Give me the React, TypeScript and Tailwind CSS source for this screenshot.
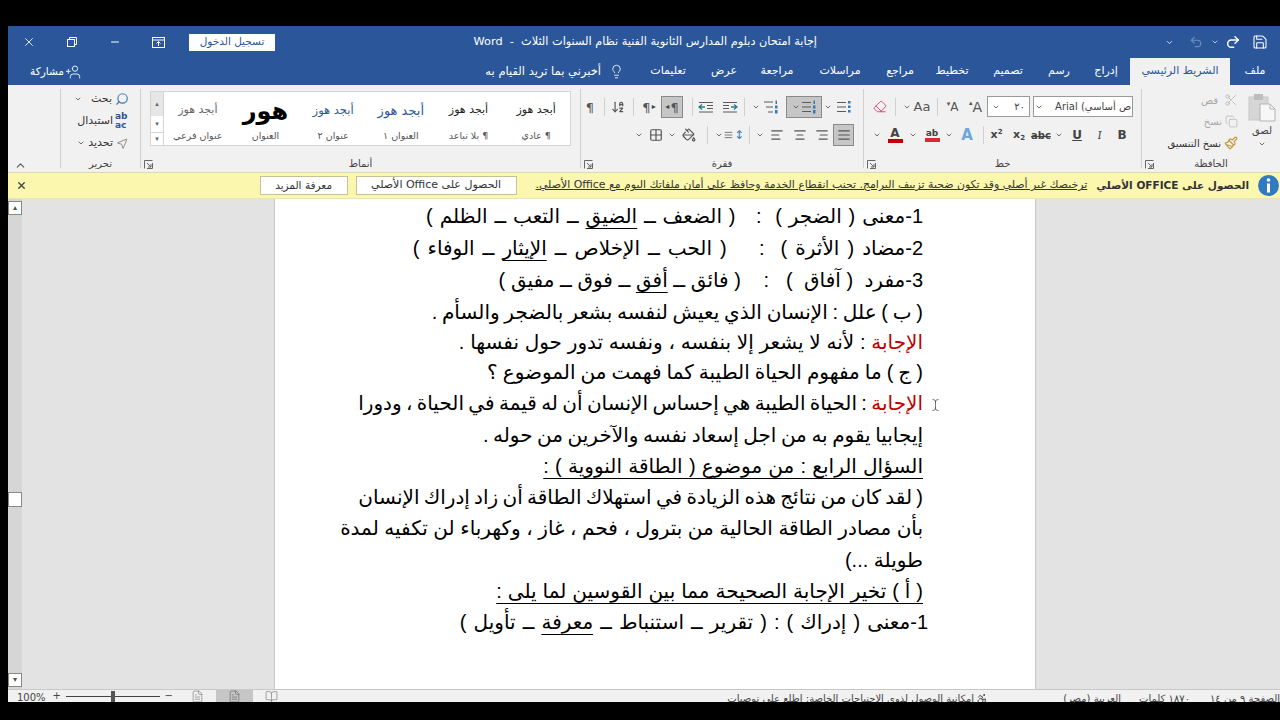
import React from "react";
import { X, Minus, Save, Undo2, Redo2, Lightbulb, UserPlus, Scissors, Copy, Paintbrush, ChevronDown, ChevronUp, Search, MousePointer2, AlignLeft, AlignRight, AlignCenter, AlignJustify, ArrowDownAZ, PaintBucket, Grid2x2, Eraser, TextCursor, FileText, BookOpen, Accessibility } from "lucide-react";

const ui = "font-['DejaVu_Sans',sans-serif]";
const doc = "font-['Liberation_Sans','DejaVu_Sans',sans-serif]";

function Caret() {
  return <ChevronDown className="w-[8px] h-[8px] text-[#555] shrink-0" strokeWidth={2.5} />;
}

function Launcher() {
  return (
    <svg width="9" height="9" viewBox="0 0 9 9" className="absolute left-[3px] bottom-[-1px]">
      <path d="M0.5 8.500v-8h8M3 3l4 4M7 4v3H4M8.500 3v5.500H3" fill="none" stroke="#666" strokeWidth="1" />
    </svg>
  );
}

function GroupLabel({ children }: { children: React.ReactNode }) {
  return <div className="absolute bottom-[-3px] inset-x-0 text-center text-[10px] leading-[14px] text-[#444]">{children}</div>;
}

function Tab({ w, label, active }: { w: string; label: string; active?: boolean }) {
  return (
    <div className={`${w} h-full flex items-center justify-center text-[11px] ${active ? "bg-[#f1f1f1] text-[#2b579a]" : "text-white"}`}>
      {label}
    </div>
  );
}

function Cell({ w, children, active }: { w: string; children?: React.ReactNode; active?: boolean }) {
  return (
    <div className={`${w} shrink-0 flex items-center justify-center gap-[1px] ${active ? "h-[22px] bg-[#c6c6c6] border border-[#8a8a8a]" : "h-[20px]"}`}>
      {children}
    </div>
  );
}

function Sep({ w }: { w: string }) {
  return (
    <div className={`${w} shrink-0 h-[20px] flex items-center justify-center`}>
      <span className="w-px h-[18px] bg-[#cfcfcf]" />
    </div>
  );
}

function ListIcon({ kind }: { kind: "bullet" | "number" | "multi" }) {
  const c = "#5b5b5b";
  const mark = "#2f7ac0";
  return (
    <svg width="16" height="14" viewBox="0 0 16 14">
      {kind === "multi" ? (
        <path d="M1 2h9M3 7h7M5 12h5" stroke={c} strokeWidth="1" fill="none" />
      ) : (
        <path d="M1 2.500h9M1 7h9M1 11.500h9" stroke={c} strokeWidth="1" fill="none" />
      )}
      {kind === "bullet" && (
        <g fill={mark}>
          <rect x="12" y="1" width="2.500" height="2.500" />
          <rect x="12" y="5.500" width="2.500" height="2.500" />
          <rect x="12" y="10" width="2.500" height="2.500" />
        </g>
      )}
      {kind !== "bullet" && (
        <g fill={mark}>
          <rect x="12.500" y="0.500" width="1.500" height="3.500" />
          <rect x="12" y="5.500" width="2.500" height="3" />
          <rect x="12" y="10" width="2.500" height="3.500" />
        </g>
      )}
    </svg>
  );
}

function IndentIcon({ flip }: { flip?: boolean }) {
  return (
    <svg width="16" height="13" viewBox="0 0 16 13" className={flip ? "-scale-x-100" : ""}>
      <path d="M1 1.500h14M9 4.500h6M9 7.500h6M1 11h14" stroke="#5b5b5b" fill="none" />
      <path d="M7 6H1M4 3.500 1 6l3 2.500" stroke="#2b7d90" strokeWidth="1.300" fill="none" />
    </svg>
  );
}

function PasteIcon() {
  return (
    <svg width="28" height="29" viewBox="0 0 28 29">
      <rect x="1" y="4" width="19" height="23" fill="#d6d6d6" stroke="#c8c8c8" />
      <rect x="6" y="1" width="9" height="6" fill="#bdbdbd" />
      <path d="M12 11h10l5 5v12H12z" fill="#f7f7f7" stroke="#b4b4b4" />
      <path d="M22 11v5h5" fill="none" stroke="#b4b4b4" />
    </svg>
  );
}

function Para({ dirRight }: { dirRight?: boolean }) {
  return (
    <span className={`flex items-center gap-[1px] text-[13px] leading-none text-[#555] ${dirRight ? "flex-row-reverse" : ""}`}>
      <span>¶</span>
      <span className="text-[8px] text-[#444]">{dirRight ? "▸" : "◂"}</span>
    </span>
  );
}

function StyleItem({ preview, label, cls }: { preview: string; label: string; cls: string }) {
  return (
    <div className="w-[68px] h-full flex flex-col items-center">
      <div className={`h-[37px] flex items-center whitespace-nowrap ${cls}`}>{preview}</div>
      <div className="text-[9.5px] text-[#555] whitespace-nowrap leading-[14px]">{label}</div>
    </div>
  );
}

function Line({ h, children, cls = "" }: { h: string; children: React.ReactNode; cls?: string }) {
  return <div className={`${h} flex items-center whitespace-nowrap ${cls}`}><span className="whitespace-pre">{children}</span></div>;
}

const U = ({ children }: { children: React.ReactNode }) => <span className="underline underline-offset-[5px] decoration-1">{children}</span>;
const R = ({ children }: { children: React.ReactNode }) => <span className="text-[#c00000]">{children}</span>;

const ic = "w-[14px] h-[14px] text-[#555]";

export default function App() {
  return (
    <div dir="rtl" className={`w-[1280px] h-[720px] bg-black pt-[26px] pb-[18px] pl-[8px] flex flex-col overflow-hidden relative ${ui}`}>
      {/* title bar */}
      <div className="h-[32px] bg-[#2b579a] flex items-center text-white shrink-0">
        <div className="flex items-center w-[130px] pr-[12px] shrink-0">
          <Save className="w-[16px] h-[16px] shrink-0" strokeWidth={1.6} />
          <Redo2 className="w-[16px] h-[16px] mr-[11px] shrink-0" strokeWidth={2.2} />
          <ChevronDown className="w-[8px] h-[8px] mr-[6px] shrink-0" />
          <Undo2 className="w-[14px] h-[14px] mr-[8px] text-[#6d8dbd] shrink-0" />
          <ChevronDown className="w-[9px] h-[9px] mr-[15px] shrink-0" />
        </div>
        <div className="w-[336px] mr-[333px] text-[11.300px] whitespace-pre text-center shrink-0">
          إجابة امتحان دبلوم المدارس الثانوية الفنية نظام السنوات الثلاث  -  Word
        </div>
        <div className="mr-[206px] w-[86px] h-[17px] bg-white text-[#2b579a] text-[10.500px] flex items-center justify-center shrink-0">تسجيل الدخول</div>
        <div className="flex items-center mr-[24px] gap-[31px]">
          <svg width="13" height="11" viewBox="0 0 13 11"><rect x=".5" y=".5" width="12" height="10" fill="none" stroke="#fff" /><path d="M.5 3h12M6.500 9V4.500M4.500 6.500l2-2 2 2" fill="none" stroke="#fff" /></svg>
          <Minus className="w-[12px] h-[12px]" />
          <svg width="10" height="10" viewBox="0 0 10 10" className="mr-[1px]"><rect x=".5" y="2.500" width="7" height="7" fill="none" stroke="#fff" /><path d="M2.500 2.500v-2h7v7h-2" fill="none" stroke="#fff" /></svg>
          <X className="w-[14px] h-[14px]" strokeWidth={1.4} />
        </div>
      </div>

      {/* tabs */}
      <div className="h-[27px] bg-[#2b579a] flex items-stretch text-white shrink-0">
        <Tab w="w-[50px]" label="ملف" />
        <Tab w="w-[100px]" label="الشريط الرئيسي" active />
        <Tab w="w-[48px]" label="إدراج" />
        <Tab w="w-[46px]" label="رسم" />
        <Tab w="w-[56px]" label="تصميم" />
        <Tab w="w-[56px]" label="تخطيط" />
        <Tab w="w-[48px]" label="مراجع" />
        <Tab w="w-[72px]" label="مراسلات" />
        <Tab w="w-[54px]" label="مراجعة" />
        <Tab w="w-[52px]" label="عرض" />
        <Tab w="w-[60px]" label="تعليمات" />
        <div className="flex items-center mr-[14px] gap-[8px] text-[11.500px] whitespace-nowrap">
          <Lightbulb className="w-[15px] h-[15px]" strokeWidth={1.3} />
          <span>أخبرني بما تريد القيام به</span>
        </div>
        <div className="flex-1" />
        <div className="flex items-center gap-[1px] pl-[22px] text-[10.5px]">
          <UserPlus className="w-[16px] h-[16px] -scale-x-100" strokeWidth={1.3} />
          <span>مشاركة</span>
        </div>
      </div>

      {/* ribbon */}
      <div className="h-[87px] bg-[#f1f1f1] flex items-stretch shrink-0 text-[10px] text-[#444]">
        {/* clipboard */}
        <div className="w-[139px] relative border-l border-[#cfcfcf] my-[4px] flex">
          <div className="w-[30px] flex flex-col items-center pt-[4px] mr-[3px]">
            <PasteIcon />
            <div className="text-[10px] mt-[3px] leading-[12px]">لصق</div>
            <div className="mt-[3px]"><Caret /></div>
          </div>
          <div className="flex flex-col gap-[3px] pt-[2px] mr-[9px]">
            <div className="flex items-center gap-[3px] h-[18px] text-[#a8a8a8]"><Scissors className="w-[14px] h-[14px] text-[#b0b0b0]" strokeWidth={1.3} /><span className="mr-[3px]">قص</span></div>
            <div className="flex items-center gap-[3px] h-[18px] text-[#a8a8a8]"><Copy className="w-[13px] h-[13px] text-[#b0b0b0]" strokeWidth={1.3} /><span>نسخ</span></div>
            <div className="flex items-center gap-[3px] h-[20px] whitespace-nowrap text-[#333]"><Paintbrush className="w-[14px] h-[14px] text-[#c19a3a]" /><span>نسخ التنسيق</span></div>
          </div>
          <GroupLabel>الحافظة</GroupLabel>
          <Launcher />
        </div>

        {/* font */}
        <div className="w-[278px] relative border-l border-[#cfcfcf] my-[4px] pt-[7px] pr-[8px] flex flex-col gap-[7px]">
          <div className="flex items-center h-[21px]">
            <div className="w-[100px] h-[21px] bg-white border border-[#9a9a9a] flex items-center justify-between overflow-hidden px-[1px] text-[10px] whitespace-nowrap shrink-0">
              <span className="truncate">ص أساسي) Arial</span><Caret />
            </div>
            <div className="w-[43px] h-[21px] mr-[3px] bg-white border border-[#9a9a9a] flex items-center justify-between px-[4px] text-[10px] shrink-0"><span>٢٠</span><Caret /></div>
            <Cell w="w-[23px]"><span className="text-[14px] leading-none text-[#555]">A<span className="text-[7px] align-top">▴</span></span></Cell>
            <Cell w="w-[23px]"><span className="text-[12px] leading-none text-[#555]">A<span className="text-[7px] align-top">▾</span></span></Cell>
            <Sep w="w-[8px]" />
            <Cell w="w-[22px]"><span dir="ltr" className="text-[13px] text-[#555]">Aa</span></Cell>
            <Cell w="w-[8px]"><Caret /></Cell>
            <Sep w="w-[16px]" />
            <Cell w="w-[14px]"><Eraser className="w-[15px] h-[15px] text-[#d9467a]" strokeWidth={1.6} /></Cell>
          </div>
          <div className="flex items-center h-[22px]">
            <Cell w="w-[22px]"><b className="text-[12px]">B</b></Cell>
            <Cell w="w-[23px]"><i className="text-[12px] font-serif">I</i></Cell>
            <Cell w="w-[22px]"><u className="text-[12px] font-bold">U</u></Cell>
            <Cell w="w-[14px]"><Caret /></Cell>
            <Cell w="w-[22px]"><s className="text-[10px] font-bold" dir="ltr">abc</s></Cell>
            <Cell w="w-[22px]"><span className="text-[11px] font-bold" dir="ltr">x<sub className="text-[7px]">2</sub></span></Cell>
            <Cell w="w-[23px]"><span className="text-[11px] font-bold" dir="ltr">x<sup className="text-[7px]">2</sup></span></Cell>
            <Sep w="w-[4px]" />
            <Cell w="w-[28px]"><span className="text-[15px] font-bold text-[#6fa5d8]">A</span></Cell>
            <Cell w="w-[8px]"><Caret /></Cell>
            <Cell w="w-[26px]"><span className="flex flex-col items-center leading-none"><span className="text-[9px] font-bold">ab</span><span className="w-[15px] h-[4px] bg-[#d62a30]" /></span></Cell>
            <Cell w="w-[12px]"><Caret /></Cell>
            <Cell w="w-[24px]"><span className="flex flex-col items-center leading-none"><span className="text-[12px] font-bold">A</span><span className="w-[15px] h-[4px] bg-[#c00000]" /></span></Cell>
            <Cell w="w-[12px]"><Caret /></Cell>
          </div>
          <GroupLabel>خط</GroupLabel>
          <Launcher />
        </div>

        {/* paragraph */}
        <div className="w-[283px] relative border-l border-[#cfcfcf] my-[4px] pt-[7px] pr-[9px] flex flex-col gap-[6px]">
          <div className="flex items-center h-[22px]">
            <Cell w="w-[20px]"><ListIcon kind="bullet" /></Cell>
            <Cell w="w-[12px]"><Caret /></Cell>
            <Cell w="w-[36px]" active><ListIcon kind="number" /><Caret /></Cell>
            <Cell w="w-[6px]" />
            <Cell w="w-[18px]"><ListIcon kind="multi" /></Cell>
            <Cell w="w-[12px]"><Caret /></Cell>
            <Sep w="w-[12px]" />
            <Cell w="w-[16px]"><IndentIcon flip /></Cell>
            <Cell w="w-[8px]" />
            <Cell w="w-[16px]"><IndentIcon /></Cell>
            <Sep w="w-[12px]" />
            <Cell w="w-[3px]" />
            <Cell w="w-[22px]" active><Para /></Cell>
            <Cell w="w-[24px]"><Para dirRight /></Cell>
            <Sep w="w-[8px]" />
            <Cell w="w-[22px]"><ArrowDownAZ className={ic} /></Cell>
            <Sep w="w-[6px]" />
            <Cell w="w-[22px]"><span className="text-[13px] leading-none text-[#555]">¶</span></Cell>
          </div>
          <div className="flex items-center h-[22px]">
            <Cell w="w-[21px]" active><AlignJustify className={ic} /></Cell>
            <Cell w="w-[22px]"><AlignRight className={ic} /></Cell>
            <Cell w="w-[23px]"><AlignCenter className={ic} /></Cell>
            <Cell w="w-[22px]"><AlignLeft className={ic} /></Cell>
            <Cell w="w-[12px]"><Caret /></Cell>
            <Sep w="w-[10px]" />
            <Cell w="w-[20px]"><span className="flex items-center gap-[1px] text-[#3b7fb5] text-[12px] leading-none">↕<AlignJustify className="w-[9px] h-[12px] text-[#555]" /></span></Cell>
            <Cell w="w-[10px]"><Caret /></Cell>
            <Sep w="w-[14px]" />
            <Cell w="w-[22px]"><PaintBucket className={ic} /></Cell>
            <Cell w="w-[12px]"><Caret /></Cell>
            <Cell w="w-[20px]"><Grid2x2 className={ic} /></Cell>
            <Cell w="w-[14px]"><Caret /></Cell>
          </div>
          <GroupLabel>فقرة</GroupLabel>
          <Launcher />
        </div>

        {/* styles */}
        <div className="w-[440px] relative border-l border-[#cfcfcf] my-[4px] pr-[9px] pt-[2px]">
          <div className="w-[421px] h-[55px] bg-white border border-[#d4d4d4] flex">
            <StyleItem preview="أبجد هوز" label="¶ عادي" cls="text-[11px] text-[#222]" />
            <StyleItem preview="أبجد هوز" label="¶ بلا تباعد" cls="text-[11px] text-[#222]" />
            <StyleItem preview="أبجد هوز" label="العنوان ١" cls="text-[13px] text-[#2b579a]" />
            <StyleItem preview="أبجد هوز" label="عنوان ٢" cls="text-[11.500px] text-[#2b579a]" />
            <StyleItem preview="هور" label="العنوان" cls="text-[24px] font-bold text-black" />
            <StyleItem preview="أبجد هوز" label="عنوان فرعي" cls="text-[11px] text-[#666]" />
            <div className="w-[13px] mr-auto border-r border-[#d4d4d4] flex flex-col items-center text-[7px] text-[#666]">
              <div className="h-[24px] w-full bg-[#e6e6e6] flex items-center justify-center">▴</div>
              <div className="h-[16px] flex items-center">▾</div>
              <div className="h-[13px] flex items-center border-t border-[#d4d4d4] w-full justify-center">▾</div>
            </div>
          </div>
          <GroupLabel>أنماط</GroupLabel>
          <Launcher />
        </div>

        {/* editing */}
        <div className="w-[80px] relative border-l border-[#cfcfcf] my-[4px] pr-[11px] pt-[1px] flex flex-col gap-[4px] text-[11px] text-[#333]">
          <div className="flex items-center gap-[3px] h-[18px]"><Search className="w-[14px] h-[14px] text-[#3f78b3] -scale-x-100" /><span>بحث</span><span className="mr-[6px]"><Caret /></span></div>
          <div className="flex items-center gap-[2px] h-[18px]"><span dir="ltr" className="text-[9px] leading-[9px] w-[14px] text-[#2b579a] font-bold shrink-0">ab ac</span><span>استبدال</span></div>
          <div className="flex items-center gap-[3px] h-[18px]"><MousePointer2 className="w-[13px] h-[15px] text-[#666] -scale-x-100" strokeWidth={1.3} /><span>تحديد</span><Caret /></div>
          <GroupLabel>تحرير</GroupLabel>
        </div>

        {/* collapse */}
        <div className="flex-1 flex items-end justify-start pl-[6px]" dir="ltr">
          <ChevronUp className="w-[13px] h-[13px] text-[#555]" />
        </div>
      </div>

      {/* banner */}
      <div className="h-[27px] bg-[#fbf7ae] border-t border-[#d9d8b0] border-b border-b-[#e8e6b8] flex items-center shrink-0 text-[10.500px] text-[#333]">
        <div className="w-[21px] h-[21px] rounded-full bg-[#2f7ac0] mr-[1px] text-white flex items-center justify-center shrink-0">
          <svg width="5" height="15" viewBox="0 0 5 15"><circle cx="2.500" cy="2" r="1.800" fill="#fff" /><rect x="1" y="5.500" width="3" height="9" fill="#fff" /></svg>
        </div>
        <b className="mr-[9px] whitespace-nowrap text-[10.500px]">الحصول على OFFICE الأصلي</b>
        <span className="mr-[9px] underline whitespace-nowrap text-[10.900px]">ترخيصك غير أصلي وقد تكون ضحية تزييف البرامج. تجنب انقطاع الخدمة وحافظ على أمان ملفاتك اليوم مع Office الأصلي.</span>
        <div className="mr-[19px] w-[161px] h-[19px] bg-white border border-[#c6c39a] flex items-center justify-center whitespace-nowrap shrink-0 text-[11px]">الحصول على Office الأصلي</div>
        <div className="mr-[8px] w-[88px] h-[19px] bg-white border border-[#c6c39a] flex items-center justify-center whitespace-nowrap shrink-0">معرفة المزيد</div>
        <div className="flex-1" />
        <X className="w-[11px] h-[11px] ml-[8px] text-[#444]" strokeWidth={3} />
      </div>

      {/* document area */}
      <div className="flex-1 min-h-0 bg-[#e3e3e3] flex items-stretch relative">
        <div className="w-[244px] shrink-0" />
        <div className={`w-[762px] bg-white border-x border-[#c8c8c8] pr-[112px] pt-[1px] text-[20px] text-black overflow-hidden ${doc}`}>
          <Line h="h-[32px]" cls="[word-spacing:1.3px]">1-معنى ( الضجر )  :   ( الضعف ــ <U>الضيق</U> ــ التعب ــ الظلم )</Line>
          <Line h="h-[32px]" cls="[word-spacing:2.5px]">2-مضاد ( الأثرة )  :    ( الحب ــ الإخلاص ــ <U>الإيثار</U> ــ الوفاء )</Line>
          <Line h="h-[32px]" cls="[word-spacing:0.1px]">3-مفرد  ( آفاق  )   :    ( فائق ــ <U>أفق</U> ــ فوق ــ مفيق )</Line>
          <Line h="h-[31px]" cls="[word-spacing:-0.8px]">( ب ) علل : الإنسان الذي يعيش لنفسه بشعر بالضجر والسأم .</Line>
          <Line h="h-[30px]" cls="[word-spacing:0.2px]"><R>الإجابة</R> : لأنه لا يشعر إلا بنفسه ، ونفسه تدور حول نفسها .</Line>
          <Line h="h-[30px]" cls="[word-spacing:-0.5px]">( ج ) ما مفهوم الحياة الطيبة كما فهمت من الموضوع ؟</Line>
          <Line h="h-[32px]" cls="[word-spacing:-1.2px]"><R>الإجابة</R> : الحياة الطيبة هي إحساس الإنسان أن له قيمة في الحياة ، ودورا</Line>
          <Line h="h-[32px]" cls="[word-spacing:-1px]">إيجابيا يقوم به من اجل إسعاد نفسه والآخرين من حوله .</Line>
          <Line h="h-[30px]" cls="[word-spacing:0.7px]"><U>السؤال الرابع : من موضوع ( الطاقة النووية ) :</U></Line>
          <Line h="h-[31px]" cls="[word-spacing:-1.3px]">( لقد كان من نتائج هذه الزيادة في استهلاك الطاقة أن زاد إدراك الإنسان</Line>
          <Line h="h-[32px]">بأن مصادر الطاقة الحالية من بترول ، فحم ، غاز ، وكهرباء لن تكفيه لمدة</Line>
          <Line h="h-[31px]">طويلة ...)</Line>
          <Line h="h-[31px]" cls="[word-spacing:0.4px]"><U>( أ ) تخير الإجابة الصحيحة مما بين القوسين لما يلى :</U></Line>
          <Line h="h-[31px]" cls="-mr-[5px] [word-spacing:1.5px]">1-معنى ( إدراك ) : ( تقرير ــ استنباط ــ <U>معرفة</U> ــ تأويل )</Line>
        </div>
        <div className="flex-1" />
        {/* left vertical scrollbar */}
        <div className="w-[14px] shrink-0 bg-[#d6d6d6] flex flex-col items-center py-[2px] text-[8px] text-[#555]">
          <div className="w-[14px] h-[14px] bg-white border border-[#888] flex items-center justify-center leading-none">▴</div>
          <div className="w-[14px] h-[15px] bg-white border border-[#888] mt-[277px]" />
          <div className="flex-1" />
          <div className="w-[14px] h-[14px] bg-white border border-[#888] flex items-center justify-center leading-none">▾</div>
        </div>
      </div>

      {/* status */}
      <div className="h-[13px] bg-[#f1f1f1] border-t border-[#c8c8c8] shrink-0 flex items-start overflow-hidden text-[10px] leading-[17px] text-[#444] whitespace-nowrap">
        <span className="w-[70px]">الصفحة ٩ من ١٤</span>
        <span className="mr-[20px]">١٨٧٠ كلمات</span>
        <span className="mr-[18px]">العربية (مصر)</span>
        <span className="mr-[75px] flex items-center gap-[2px]"><Accessibility className="w-[12px] h-[12px]" />إمكانية الوصول لذوي الاحتياجات الخاصة: اطلع على توصيات</span>
        <div className="flex-1" />
        <BookOpen className="w-[13px] h-[13px] text-[#777] ml-[12px] shrink-0" strokeWidth={1.2} />
        <div className="w-[37px] h-[13px] bg-[#c6c6c6] flex justify-center ml-[12px] shrink-0"><FileText className="w-[13px] h-[13px] text-[#666]" strokeWidth={1.2} /></div>
        <FileText className="w-[13px] h-[13px] text-[#777] ml-[18px] shrink-0" strokeWidth={1.2} />
        <div className="ml-[5px] w-[8px] text-center leading-[12px]">−</div>
        <div className="w-[94px] h-[1px] bg-[#444] mt-[6px] ml-[5px] relative shrink-0"><div className="absolute left-[45px] -top-[5px] w-[4px] h-[11px] bg-[#555]" /></div>
        <div className="ml-[6px] w-[8px] text-center leading-[12px]">+</div>
        <div dir="ltr" className="w-[30px] ml-[9px] text-[10px] leading-[16px]">100%</div>
      </div>

      <TextCursor className="absolute left-[929px] top-[398px] w-[13px] h-[14px] text-[#333]" strokeWidth={1.2} />
    </div>
  );
}
